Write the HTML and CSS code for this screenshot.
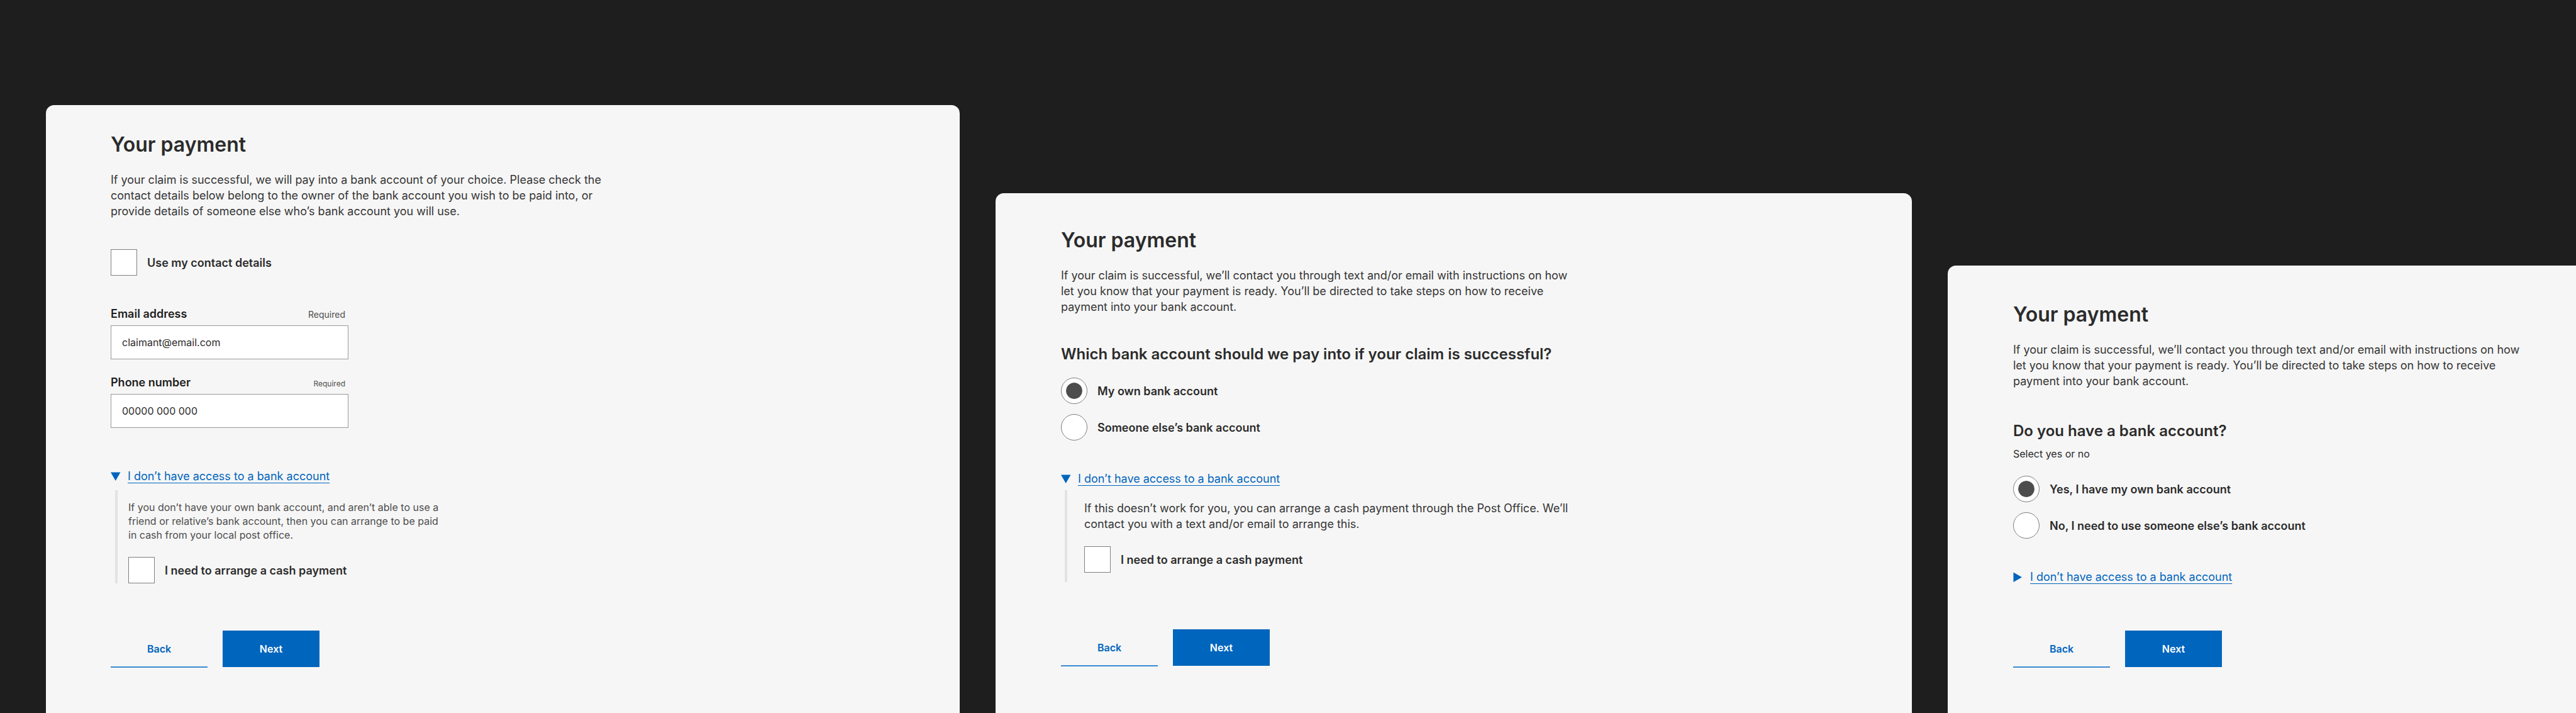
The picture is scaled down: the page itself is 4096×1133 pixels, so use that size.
FILE: index.html
```html
<!DOCTYPE html>
<html lang="en">
<head>
<meta charset="utf-8">
<meta name="viewport" content="width=device-width, initial-scale=1">
<title>Your payment</title>
<link rel="stylesheet" href="styles.css">
</head>
<body>
<main class="board">

  <form class="panel panel-contact">
    <h1 class="title">Your payment</h1>
    <p class="intro">If your claim is successful, we will pay into a bank account of your choice. Please check the contact details below belong to the owner of the bank account you wish to be paid into, or provide details of someone else who’s bank account you will use.</p>

    <label class="choice choice-single"><input class="box" type="checkbox" name="use-contact">Use my contact details</label>

    <div class="fields">
      <div class="field">
        <div class="field-head">
          <label class="field-label" for="email">Email address</label>
          <span class="required">Required</span>
        </div>
        <input class="text-input" id="email" type="email" value="claimant@email.com">
      </div>
      <div class="field">
        <div class="field-head">
          <label class="field-label" for="phone">Phone number</label>
          <span class="required required-small">Required</span>
        </div>
        <input class="text-input" id="phone" type="tel" value="00000 000 000">
      </div>
    </div>

    <details class="more" open>
      <summary class="more-toggle">
        <svg class="arrow" viewBox="0 0 16 16" aria-hidden="true"><path d="M0 1.500H15.500L7.750 15Z"/></svg>
        <span class="more-text">I don’t have access to a bank account</span>
      </summary>
      <div class="more-body">
        <p class="note note-small">If you don’t have your own bank account, and aren’t able to use a friend or relative’s bank account, then you can arrange to be paid in cash from your local post office.</p>
        <label class="choice"><input class="box" type="checkbox" name="cash-contact">I need to arrange a cash payment</label>
      </div>
    </details>

    <div class="actions">
      <button class="btn btn-back" type="button">Back</button>
      <button class="btn btn-next" type="button">Next</button>
    </div>
  </form>

  <form class="panel panel-choose">
    <h1 class="title">Your payment</h1>
    <p class="intro">If your claim is successful, we’ll contact you through text and/or email with instructions on how let you know that your payment is ready. You’ll be directed to take steps on how to receive payment into your bank account.</p>

    <fieldset class="question">
      <legend class="question-title">Which bank account should we pay into if your claim is successful?</legend>
      <div class="choices">
        <label class="choice"><input class="radio" type="radio" name="account" checked>My own bank account</label>
        <label class="choice"><input class="radio" type="radio" name="account">Someone else’s bank account</label>
      </div>
    </fieldset>

    <details class="more" open>
      <summary class="more-toggle">
        <svg class="arrow" viewBox="0 0 16 16" aria-hidden="true"><path d="M0 1.500H15.500L7.750 15Z"/></svg>
        <span class="more-text">I don’t have access to a bank account</span>
      </summary>
      <div class="more-body">
        <p class="note">If this doesn’t work for you, you can arrange a cash payment through the Post Office. We’ll contact you with a text and/or email to arrange this.</p>
        <label class="choice"><input class="box" type="checkbox" name="cash-choose">I need to arrange a cash payment</label>
      </div>
    </details>

    <div class="actions">
      <button class="btn btn-back" type="button">Back</button>
      <button class="btn btn-next" type="button">Next</button>
    </div>
  </form>

  <form class="panel panel-yesno">
    <h1 class="title">Your payment</h1>
    <p class="intro">If your claim is successful, we’ll contact you through text and/or email with instructions on how let you know that your payment is ready. You’ll be directed to take steps on how to receive payment into your bank account.</p>

    <fieldset class="question">
      <legend class="question-title">Do you have a bank account?</legend>
      <p class="hint">Select yes or no</p>
      <div class="choices">
        <label class="choice"><input class="radio" type="radio" name="has-account" checked>Yes, I have my own bank account</label>
        <label class="choice"><input class="radio" type="radio" name="has-account">No, I need to use someone else’s bank account</label>
      </div>
    </fieldset>

    <details class="more">
      <summary class="more-toggle">
        <svg class="arrow" viewBox="0 0 16 16" aria-hidden="true"><path d="M0.500 0.500V16L14 8.250Z"/></svg>
        <span class="more-text">I don’t have access to a bank account</span>
      </summary>
    </details>

    <div class="actions">
      <button class="btn btn-back" type="button">Back</button>
      <button class="btn btn-next" type="button">Next</button>
    </div>
  </form>

</main>
</body>
</html>
```
FILE: styles.css
```css
:root {
  --ink: #2b2b2b;
  --ink-body: #353535;
  --ink-soft: #4d4d4d;
  --line: #808080;
  --blue: #0065bd;
}

* { box-sizing: border-box; }

body {
  margin: 0;
  background: #1e1e1e;
  color: var(--ink);
  font: 400 18px/25px Inter, "Liberation Sans", sans-serif;
}

.board {
  display: grid;
  grid-template-columns: 1453fr 1457fr 999fr;
  gap: 57px;
  min-height: 100vh;
  padding-left: 73px;
}

.panel {
  min-width: 0;
  padding: 44px 40px 40px 104px;
  background: #f6f6f6;
  border-radius: 13px 13px 0 0;
}
.panel-contact { margin-top: 167px; padding-left: 103px; }
.panel-choose { margin-top: 307px; padding-top: 56px; }
.panel-yesno { margin-top: 422px; padding-top: 59px; border-radius: 13px 0 0; }

.title {
  margin: 0 0 24px;
  font-size: 32px;
  line-height: 38px;
  font-weight: 600;
}

.intro {
  max-width: 820px;
  margin: 0 0 48px;
  color: var(--ink-body);
}

/* Tick boxes and radios */
.choice {
  display: flex;
  align-items: center;
  gap: 16px;
  width: fit-content;
  font-weight: 600;
}
.choice-single { margin-bottom: 48px; }

.choices {
  display: flex;
  flex-direction: column;
  gap: 16px;
}

.box,
.radio {
  appearance: none;
  flex: none;
  width: 42px;
  height: 42px;
  margin: 0;
  border: 1px solid var(--line);
  background: #fff;
}
.radio { border-radius: 50%; }
.radio:checked {
  padding: 7px;
  background: var(--ink-soft) content-box;
  box-shadow: inset 0 0 0 7px #fff;
}

/* Text fields */
.fields {
  display: flex;
  flex-direction: column;
  gap: 24px;
  width: 378px;
}
.field-head {
  display: flex;
  justify-content: space-between;
  align-items: baseline;
  height: 25px;
  margin-bottom: 6px;
  padding-right: 5px;
}
.field-label { font-weight: 600; color: #1e1e1e; }
.required { font-size: 14px; color: var(--ink-soft); }
.required-small { font-size: 12px; }
.text-input {
  display: block;
  width: 100%;
  height: 54px;
  padding: 0 17px;
  border: 1px solid #999;
  border-radius: 0;
  background: #fff;
  color: var(--ink);
  font: inherit;
  font-size: 16px;
}

/* Questions */
.question {
  min-width: 0;
  margin: 0;
  padding: 0;
  border: 0;
}
.question-title {
  margin-bottom: 22px;
  padding: 0;
  font-size: 24px;
  line-height: 30px;
  font-weight: 600;
}
.hint {
  margin: 0 0 24px;
  font-size: 16px;
  line-height: 22px;
}
.panel-yesno .intro { margin-bottom: 52px; }
.panel-yesno .question-title { margin-bottom: 10px; }

/* Expandable help */
.more { margin-top: 48px; }
.panel-contact .more { margin-top: 64px; }

.more-toggle {
  display: flex;
  align-items: center;
  gap: 11px;
  width: fit-content;
  color: var(--blue);
  list-style: none;
  cursor: pointer;
}
.more-toggle::-webkit-details-marker { display: none; }
.arrow {
  width: 16px;
  height: 16px;
  fill: currentColor;
}
.more-text {
  text-decoration: underline 1px;
  text-underline-offset: 4px;
  text-decoration-skip-ink: none;
}

.more-body {
  width: fit-content;
  margin: 6px 0 0 6px;
  padding: 16px 0 15px 27px;
  border-left: 4px solid #e3e3e3;
}
.panel-contact .more-body {
  margin: 10px 0 0 7px;
  padding: 16px 0 0 17px;
}
.note {
  max-width: 800px;
  margin: 0 0 23px;
  color: var(--ink-body);
}
.note-small {
  max-width: 506px;
  margin-bottom: 24px;
  color: var(--ink-soft);
  font-size: 16px;
  line-height: 22px;
}

/* Buttons */
.actions {
  display: flex;
  gap: 24px;
  margin-top: 75px;
}
.panel-yesno .actions { margin-top: 73px; }
.btn {
  width: 154px;
  height: 58px;
  padding: 0;
  border: 0;
  font: inherit;
  font-size: 16px;
  font-weight: 600;
}
.btn-back {
  background: none;
  color: var(--blue);
  box-shadow: 0 1px #3b8bd0, inset 0 -1px #3b8bd0;
}
.btn-next {
  background: var(--blue);
  color: #fff;
}
```
